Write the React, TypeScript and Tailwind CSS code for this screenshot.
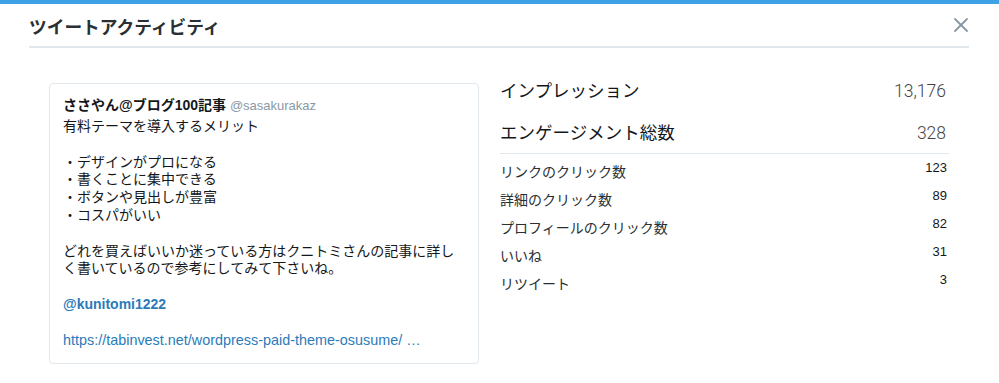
import { X } from 'lucide-react'

const font = { fontFamily: '"Liberation Sans", "Noto Sans CJK JP", sans-serif' }
const thin = { fontFamily: 'Roboto, "Liberation Sans", sans-serif' }

const details = [
  { label: 'リンクのクリック数', value: '123' },
  { label: '詳細のクリック数', value: '89' },
  { label: 'プロフィールのクリック数', value: '82' },
  { label: 'いいね', value: '31' },
  { label: 'リツイート', value: '3' },
]

function TweetCard() {
  return (
    <div className="w-[430px] shrink-0 rounded-[4px] border border-[#e1e8ed] px-[13px] pt-[12px] pb-[14px] text-[14px] text-[#14171a]">
      <div className="leading-[18px]">
        <span className="font-bold">ささやん@ブログ100記事</span>{' '}
        <span className="text-[13px] text-[#8899a6]">@sasakurakaz</span>
      </div>
      <div className="mt-[3px] leading-[17.8px]">
        <p>有料テーマを導入するメリット</p>
        <p>&nbsp;</p>
        <p>・デザインがプロになる</p>
        <p>・書くことに集中できる</p>
        <p>・ボタンや見出しが豊富</p>
        <p>・コスパがいい</p>
        <p>&nbsp;</p>
        <p>どれを買えばいいか迷っている方はクニトミさんの記事に詳しく書いているので参考にしてみて下さいね。</p>
        <p>&nbsp;</p>
        <p className="font-bold text-[#2b7bb9]">@kunitomi1222</p>
        <p>&nbsp;</p>
        <p className="text-[14.4px] text-[#2b7bb9]">https://tabinvest.net/wordpress-paid-theme-osusume/ …</p>
      </div>
    </div>
  )
}

function Metrics() {
  return (
    <div className="flex-1">
      <div className="flex justify-between text-[17.5px] leading-[16px]">
        <span className="text-[#14171a]">インプレッション</span>
        <span className="pr-[3px] font-light text-[#444]" style={thin}>13,176</span>
      </div>
      <div className="mt-[26px] flex justify-between border-b border-[#e1e8ed] pb-[12px] text-[17.5px] leading-[16px]">
        <span className="text-[#14171a]">エンゲージメント総数</span>
        <span className="pr-[3px] font-light text-[#444]" style={thin}>328</span>
      </div>
      <div className="pt-[4px]">
        {details.map((d) => (
          <div key={d.label} className="flex h-[28px] items-start justify-between">
            <span className="text-[14px] leading-[28px] text-[#292f33]">{d.label}</span>
            <span className="pr-[2px] text-[13px] leading-[20px] text-[#14171a]">{d.value}</span>
          </div>
        ))}
      </div>
    </div>
  )
}

export default function App() {
  return (
    <div className="h-[383px] w-[999px] bg-white" style={font}>
      <div className="h-[4px] bg-[#3ea2e6]" />
      <div className="pl-[29px] pr-[30px]">
        <div className="flex items-start justify-between border-b-2 border-[#e1e8ed] pt-[14px] pb-[8px]">
          <h1 className="text-[17.7px] font-bold leading-[20px] text-[#292f33]">ツイートアクティビティ</h1>
          <X className="mt-[-5px] mr-[-4px] h-[24px] w-[24px] text-[#8899a6]" strokeWidth={1.8} />
        </div>
      </div>
      <div className="flex gap-[21px] pl-[49px] pr-[50px] pt-[35px]">
        <TweetCard />
        <Metrics />
      </div>
    </div>
  )
}
